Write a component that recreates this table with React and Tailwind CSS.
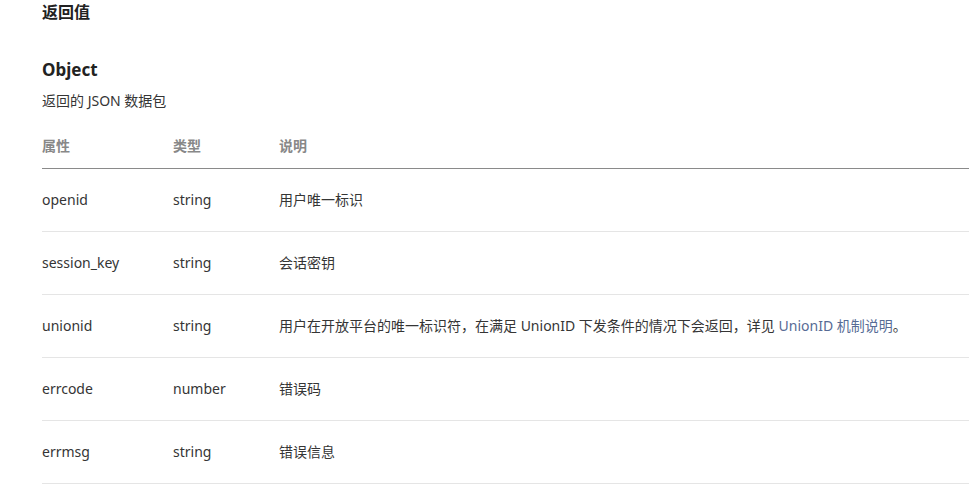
import React from 'react';

const rows = [
    { name: 'openid', type: 'string', desc: '用户唯一标识' },
    { name: 'session_key', type: 'string', desc: '会话密钥' },
    { name: 'unionid', type: 'string', desc: 'union' },
    { name: 'errcode', type: 'number', desc: '错误码' },
    { name: 'errmsg', type: 'string', desc: '错误信息' },
];

function Desc({ desc }) {
    if (desc !== 'union') return <span>{desc}</span>;
    return (
        <span>
            用户在开放平台的唯一标识符，在满足 UnionID 下发条件的情况下会返回，详见{' '}
            <a href="#" className="text-[#576b95]">UnionID 机制说明</a>。
        </span>
    );
}

export default function App() {
    return (
        <div className="w-[969px] h-[487px] overflow-hidden bg-white pl-[42px] text-[#353535] font-['Noto_Sans','Noto_Sans_CJK_SC',sans-serif]">
            <h3 className="text-[16px] font-bold leading-[24px] text-[#222]">返回值</h3>
            <h4 className="mt-[34px] text-[17px] font-bold leading-[24px] text-[#222]">Object</h4>
            <p className="mt-[7px] text-[14px] leading-[24px]">返回的 JSON 数据包</p>
            <div className="mt-[23px]">
                <div className="grid grid-cols-[131px_106px_1fr] border-b border-[#8a8a8a] pb-[12px] text-[14px] font-bold leading-[20px] text-[#888]">
                    <div>属性</div>
                    <div>类型</div>
                    <div>说明</div>
                </div>
                {rows.map((r) => (
                    <div
                        key={r.name}
                        className="grid grid-cols-[131px_106px_1fr] items-center h-[63px] border-b border-[#e5e5e5] text-[14px] leading-[20px]"
                    >
                        <div>{r.name}</div>
                        <div>{r.type}</div>
                        <div><Desc desc={r.desc} /></div>
                    </div>
                ))}
            </div>
        </div>
    );
}
